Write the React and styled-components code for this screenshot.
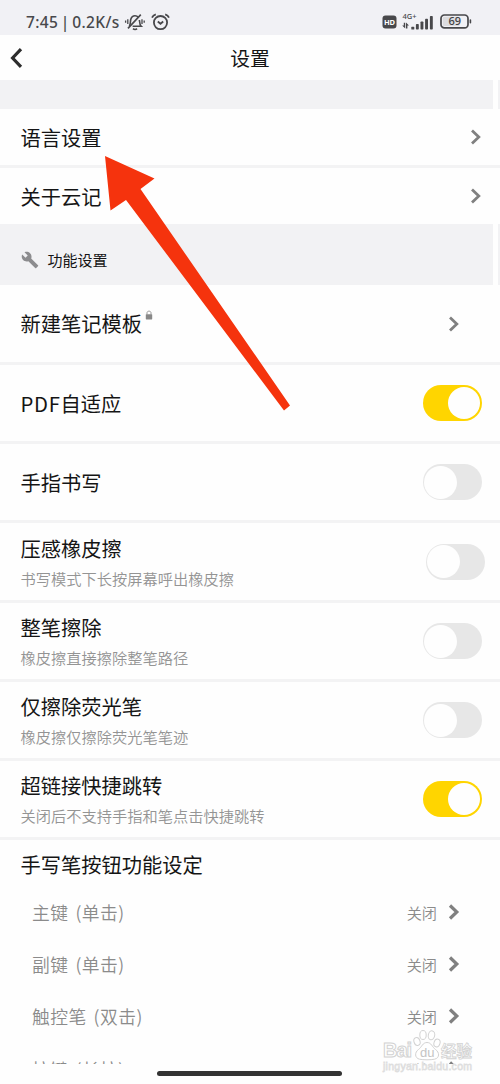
import React, { useState } from 'react';
import styled, { createGlobalStyle } from 'styled-components';
import { MdBuild } from 'react-icons/md';

const GlobalStyle = createGlobalStyle`
  * {
    box-sizing: border-box;
  }

  body {
    margin: 0;
    background: #fefefe;
    font-family: "Noto Sans CJK SC", sans-serif;
    color: #151515;
  }
`;

const Screen = styled.div`
  position: relative;
  display: flex;
  flex-direction: column;
  width: 500px;
  height: 1084px;
  overflow: hidden;
  background: #fefefe;
`;

const StatusBar = styled.div`
  display: flex;
  align-items: center;
  justify-content: space-between;
  height: 35px;
  padding: 8px 27px 0 26px;
  background: #f1f1f5;
  color: #48484b;
  flex: none;
`;

const StatusGroup = styled.div`
  display: flex;
  align-items: center;
  height: 22px;
`;

const Clock = styled.span`
  width: 98px;
  font-family: "Noto Sans", sans-serif;
  font-size: 15.5px;
  font-weight: 500;
  letter-spacing: 0.35px;
  word-spacing: -1.8px;
  line-height: 22px;
  white-space: nowrap;
`;

const StatusIcon = styled.svg`
  display: block;
  flex: none;
  margin-left: ${(props) => props.$gap || 0}px;
`;

const NavBar = styled.div`
  display: grid;
  grid-template-columns: 60px 1fr 60px;
  align-items: center;
  height: 45px;
  flex: none;
`;

const BackButton = styled.button`
  display: flex;
  padding: 0 0 0 9px;
  border: none;
  background: none;
  cursor: pointer;
`;

const NavTitle = styled.h1`
  margin: 0;
  font-size: 19.8px;
  font-weight: 400;
  line-height: 28px;
  text-align: center;
`;

const Band = styled.div`
  display: flex;
  align-items: center;
  height: ${(props) => props.$height}px;
  padding: ${(props) => props.$top || 0}px 21px 0;
  background: linear-gradient(to right, #f2f2f4 493px, #fefefe 493px, #fefefe 498px, #f2f2f4 498px);
  flex: none;
`;

const BandTitle = styled.span`
  margin-left: 8.5px;
  font-size: 15px;
  line-height: 22px;
`;

const WrenchIcon = styled(MdBuild)`
  width: 18px;
  height: 18px;
  color: #8c8c8e;
`;

const Row = styled.div`
  display: flex;
  align-items: center;
  justify-content: space-between;
  height: ${(props) => props.$height || 79}px;
  padding: 0 ${(props) => props.$right || 18}px 0 20.5px;
  border-bottom: ${(props) => (props.$last ? 'none' : '3px solid #f3f3f4')};
  flex: none;
`;

const RowTitle = styled.div`
  margin-top: ${(props) => (props.$single ? 2 : 0)}px;
  font-size: 20.25px;
  line-height: 28px;
  white-space: nowrap;
`;

const Latin = styled.span`
  letter-spacing: 0.7px;
`;

const RowHint = styled.div`
  margin-top: 4px;
  font-size: 15.25px;
  line-height: 22px;
  color: #949494;
  font-weight: 350;
  white-space: nowrap;
`;

const Lock = styled.svg`
  margin-left: 3px;
  vertical-align: 12px;
`;

const Track = styled.button`
  display: flex;
  align-items: center;
  justify-content: ${(props) => (props.$on ? 'flex-end' : 'flex-start')};
  width: 59px;
  height: 36px;
  padding: 0 ${(props) => (props.$on ? 2 : 1)}px;
  border: none;
  border-radius: 18px;
  background: ${(props) => (props.$on ? '#ffd500' : '#e7e7e7')};
  cursor: pointer;
`;

const Knob = styled.span`
  width: ${(props) => (props.$on ? 32 : 33)}px;
  height: ${(props) => (props.$on ? 32 : 33)}px;
  border-radius: 50%;
  background: #fefefe;
`;

const PenSection = styled.section`
  height: 223.5px;
  padding-top: 11px;
  overflow: hidden;
  flex: none;
`;

const PenTitle = styled(RowTitle)`
  padding-left: 20.5px;
  margin-bottom: 7px;
`;

const PenRow = styled.div`
  display: flex;
  align-items: center;
  height: 52.2px;
  padding: 0 40px 0 32px;
  color: #8b8b8b;
`;

const PenLabel = styled.span`
  flex: 1;
  font-size: 17.8px;
  font-weight: 350;
  letter-spacing: 0.45px;
  word-spacing: 2.5px;
`;

const PenValue = styled.span`
  margin-right: 11px;
  font-size: 15.2px;
  font-weight: 350;
`;

const HomeBar = styled.div`
  position: absolute;
  left: 157px;
  bottom: 8px;
  width: 185px;
  height: 5px;
  border-radius: 3px;
  background: #333;
`;

const Pointer = styled.svg`
  position: absolute;
  left: 0;
  top: 0;
  pointer-events: none;
`;

const Watermark = styled.svg`
  position: absolute;
  left: 380px;
  top: 1026px;
  pointer-events: none;
`;

const features = [
  { id: 'pdf', latin: 'PDF', title: '自适应', on: true },
  { id: 'finger', title: '手指书写', on: false },
  { id: 'pressure', title: '压感橡皮擦', hint: '书写模式下长按屏幕呼出橡皮擦', on: false, right: 15, height: 80 },
  { id: 'stroke', title: '整笔擦除', hint: '橡皮擦直接擦除整笔路径', on: false },
  { id: 'marker', title: '仅擦除荧光笔', hint: '橡皮擦仅擦除荧光笔笔迹', on: false },
  { id: 'link', title: '超链接快捷跳转', hint: '关闭后不支持手指和笔点击快捷跳转', on: true },
];

const penKeys = ['主键 (单击)', '副键 (单击)', '触控笔 (双击)', '按键 (长按)'];

function Chevron({ bold }) {
  return (
    <svg width="12" height="16" viewBox="0 0 12 16" fill="none" stroke="#808080" strokeWidth={bold ? 3.2 : 2.8}>
      <path d="M2 1.5 L8.8 8 L2 14.5" />
    </svg>
  );
}

function MutedBell() {
  return (
    <StatusIcon width="22" height="18" viewBox="0 0 22 18" fill="none" stroke="currentColor" strokeWidth="1.6">
      <path d="M5.2 13 C6.8 11.7 6.2 8.3 6.8 6.2 C7.5 3.9 9 2.7 11 2.7 C12.4 2.7 13.5 3.3 14.2 4.2" />
      <path d="M15.4 7 C15.6 9.3 15.6 11.8 17.2 13.3 H8.6" />
      <path d="M9 15.6 C10.2 16.8 11.9 16.8 13 15.6" />
      <path d="M4 15.4 L16.8 1.6" />
      <path d="M3.8 6.2 V11 M1.6 7.4 V9.8 M18 6.2 V11 M20.2 7.4 V9.8" strokeWidth="1.3" />
    </StatusIcon>
  );
}

function AlarmClock() {
  return (
    <StatusIcon $gap={5} width="19" height="18" viewBox="0 0 19 18" fill="none" stroke="currentColor" strokeWidth="1.8">
      <circle cx="9.5" cy="9.6" r="6.6" />
      <path d="M6.8 8.5 L9.5 10.8 L12.2 8.5" />
      <path d="M1 4.6 C1.7 3 3 1.9 4.8 1.3 M18 4.6 C17.3 3 16 1.9 14.2 1.3" />
    </StatusIcon>
  );
}

function Signal() {
  return (
    <StatusIcon $gap={5} width="33" height="18" viewBox="0 0 33 18" fill="currentColor">
      <text x="0.5" y="6.2" fontFamily="Noto Sans, sans-serif" fontSize="7.5" fontWeight="500" textLength="14">4G+</text>
      <path d="M0.2 12.6 H1.8 V9.8 H3.2 V15.6 Z M7 12.6 H5.4 V15.4 H4 V9.6 Z" />
      <rect x="9.3" y="13.8" width="3" height="2.7" rx="0.6" />
      <rect x="13.9" y="11" width="2.9" height="5.5" rx="0.8" />
      <rect x="18.5" y="8.5" width="2.9" height="8" rx="0.8" />
      <rect x="23.1" y="5.7" width="2.9" height="10.8" rx="0.8" />
      <rect x="27.9" y="3" width="2.9" height="13.5" rx="0.8" />
    </StatusIcon>
  );
}

function Switch({ defaultOn }) {
  const [on, setOn] = useState(defaultOn);

  return (
    <Track $on={on} role="switch" aria-checked={on} onClick={() => setOn(!on)}>
      <Knob $on={on} />
    </Track>
  );
}

function App() {
  return (
    <Screen>
      <GlobalStyle />
      <StatusBar>
        <StatusGroup>
          <Clock>7:45 | 0.2K/s</Clock>
          <MutedBell />
          <AlarmClock />
        </StatusGroup>
        <StatusGroup>
          <StatusIcon width="15" height="14" viewBox="0 0 15 14">
            <rect x="0.5" y="0.5" width="14" height="13" rx="3" fill="#48484b" />
            <text x="7.5" y="9.8" fill="#fff" fontFamily="Noto Sans, sans-serif" fontSize="7.5" fontWeight="700" textAnchor="middle">HD</text>
          </StatusIcon>
          <Signal />
          <StatusIcon $gap={5} width="33" height="15" viewBox="0 0 33 15">
            <rect x="1" y="1" width="27" height="12.8" rx="3.4" fill="none" stroke="#48484b" strokeWidth="1.7" />
            <rect x="2.8" y="2.8" width="17" height="9.2" rx="1.5" fill="#dcdcdf" />
            <rect x="29.6" y="5.2" width="1.6" height="4.4" rx="0.8" fill="#48484b" />
            <text x="14.8" y="11.4" fill="#404043" fontFamily="Noto Sans, sans-serif" fontSize="11" fontWeight="500" textAnchor="middle">69</text>
          </StatusIcon>
        </StatusGroup>
      </StatusBar>

      <NavBar>
        <BackButton aria-label="返回">
          <svg width="15" height="22" viewBox="0 0 15 22" fill="none" stroke="#2d2d2d" strokeWidth="3.2">
            <path d="M12 2.2 L3.6 11 L12 19.8" />
          </svg>
        </BackButton>
        <NavTitle>设置</NavTitle>
      </NavBar>

      <Band $height={29} />
      <Row $height={59}>
        <RowTitle $single>语言设置</RowTitle>
        <Chevron />
      </Row>
      <Row $height={56} $last>
        <RowTitle $single>关于云记</RowTitle>
        <Chevron />
      </Row>

      <Band $height={61} $top={11}>
        <WrenchIcon />
        <BandTitle>功能设置</BandTitle>
      </Band>
      <Row $height={80} $right={40}>
        <RowTitle>
          新建笔记模板
          <Lock width="8" height="10" viewBox="0 0 8 10">
            <path d="M2 4.5 V2.8 C2 0.6 6 0.6 6 2.8 V4.5" fill="none" stroke="#999" strokeWidth="1" />
            <rect x="0.8" y="4.2" width="6.4" height="5.2" rx="0.6" fill="#888" />
          </Lock>
        </RowTitle>
        <Chevron />
      </Row>
      {features.map((item) => (
        <Row key={item.id} $right={item.right} $height={item.height}>
          <div>
            <RowTitle $single={!item.hint}>
              {item.latin && <Latin>{item.latin}</Latin>}
              {item.title}
            </RowTitle>
            {item.hint && <RowHint>{item.hint}</RowHint>}
          </div>
          <Switch defaultOn={item.on} />
        </Row>
      ))}

      <PenSection>
        <PenTitle>手写笔按钮功能设定</PenTitle>
        {penKeys.map((name) => (
          <PenRow key={name}>
            <PenLabel>{name}</PenLabel>
            <PenValue>关闭</PenValue>
            <Chevron bold />
          </PenRow>
        ))}
      </PenSection>

      <HomeBar />

      <Pointer width="300" height="420" viewBox="0 0 300 420">
        <polygon points="105,156 154.5,178.5 140.5,189 290,405.5 284,410.5 126,200 110.5,210.5" fill="#f5330d" />
      </Pointer>

      <Watermark width="98" height="48" viewBox="0 0 98 48" fill="#fff" stroke="#d2d2d2" strokeWidth="1">
        <text x="3" y="31" fontFamily="Liberation Sans, sans-serif" fontSize="20" fontWeight="700" textLength="29">Bai</text>
        <ellipse cx="37" cy="15.5" rx="3" ry="4" transform="rotate(-20 37 15.5)" />
        <ellipse cx="43" cy="9" rx="3.2" ry="4.5" />
        <ellipse cx="51.5" cy="9.3" rx="3.2" ry="4.5" transform="rotate(12 51.5 9.3)" />
        <ellipse cx="57" cy="17" rx="3" ry="4" transform="rotate(18 57 17)" />
        <path d="M47 16.5 C42.5 16.5 42 21 38.5 23.5 C34.5 26.3 34.5 32 39.5 33.2 C43 34 51 34 54.5 33.2 C60 32 59.5 26.3 55.5 23.5 C52 21 51.5 16.5 47 16.5 Z" />
        <text x="40" y="31" fontFamily="Liberation Sans, sans-serif" fontSize="13" fill="#c4c4c4" stroke="none">du</text>
        <text x="61" y="31" fontFamily="Noto Sans CJK SC, sans-serif" fontSize="15.5" fontWeight="700" strokeWidth="0.8">经验</text>
        <text x="3" y="44" fontFamily="Liberation Sans, sans-serif" fontSize="10.5" textLength="89" stroke="#dedede" strokeWidth="0.8">jingyan.baidu.com</text>
      </Watermark>
    </Screen>
  );
}

export default App;
